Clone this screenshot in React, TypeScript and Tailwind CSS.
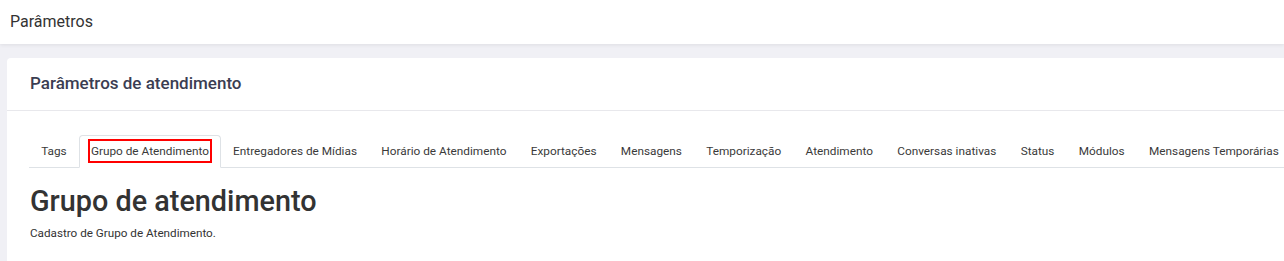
import React from 'react';

const TABS = [
  'Tags',
  'Grupo de Atendimento',
  'Entregadores de Mídias',
  'Horário de Atendimento',
  'Exportações',
  'Mensagens',
  'Temporização',
  'Atendimento',
  'Conversas inativas',
  'Status',
  'Módulos',
  'Mensagens Temporárias',
];

export default function App() {
  const active = 1;

  return (
    <div className="w-[1284px] h-[261px] overflow-hidden bg-[#f0f0f5] font-['Roboto',sans-serif]">
      {/* Top bar */}
      <div className="relative z-10 h-[44px] bg-white flex items-center px-[10px] shadow-[0_1px_4px_rgba(0,0,0,0.08)]">
        <h1 className="text-[16px] text-[#333] leading-none">Parâmetros</h1>
      </div>

      <div className="pt-[14px] pl-[7px]">
        <div className="w-[1320px] h-[220px] bg-white rounded-tl-[4px]">
          <div className="h-[53px] flex items-center px-[23px] border-b border-[#e8e8ec]">
            <h2 className="text-[17px] font-medium text-[#3b3d52]">Parâmetros de atendimento</h2>
          </div>

          <div className="px-[22px] pt-[24px]">
            <ul className="flex flex-nowrap border-b border-[#dee2e6] w-max">
              {TABS.map((tab, i) =>
                i === active ? (
                  <li
                    key={tab}
                    className="-mb-px px-2 pt-[3px] pb-[4px] border border-[#dee2e6] border-b-white rounded-t-[4px] bg-white"
                  >
                    <span className="block border-2 border-[#ff0000] px-px h-[24px] leading-[20px] text-[11.8px] text-[#3a3a3a] whitespace-nowrap">
                      {tab}
                    </span>
                  </li>
                ) : (
                  <li
                    key={tab}
                    className="-mb-px px-[11.2px] pt-[3px] pb-[4px] border border-transparent"
                  >
                    <span className="block h-[24px] leading-[24px] text-[11.8px] text-[#3a3a3a] whitespace-nowrap">
                      {tab}
                    </span>
                  </li>
                )
              )}
            </ul>

            <div className="pt-[15px] pl-px">
              <h3 className="text-[28.8px] font-medium text-[#333] leading-[36px]">Grupo de atendimento</h3>
              <p className="mt-[6px] text-[11.7px] text-[#333] leading-[16px]">Cadastro de Grupo de Atendimento.</p>
            </div>
          </div>
        </div>
      </div>
    </div>
  );
}
